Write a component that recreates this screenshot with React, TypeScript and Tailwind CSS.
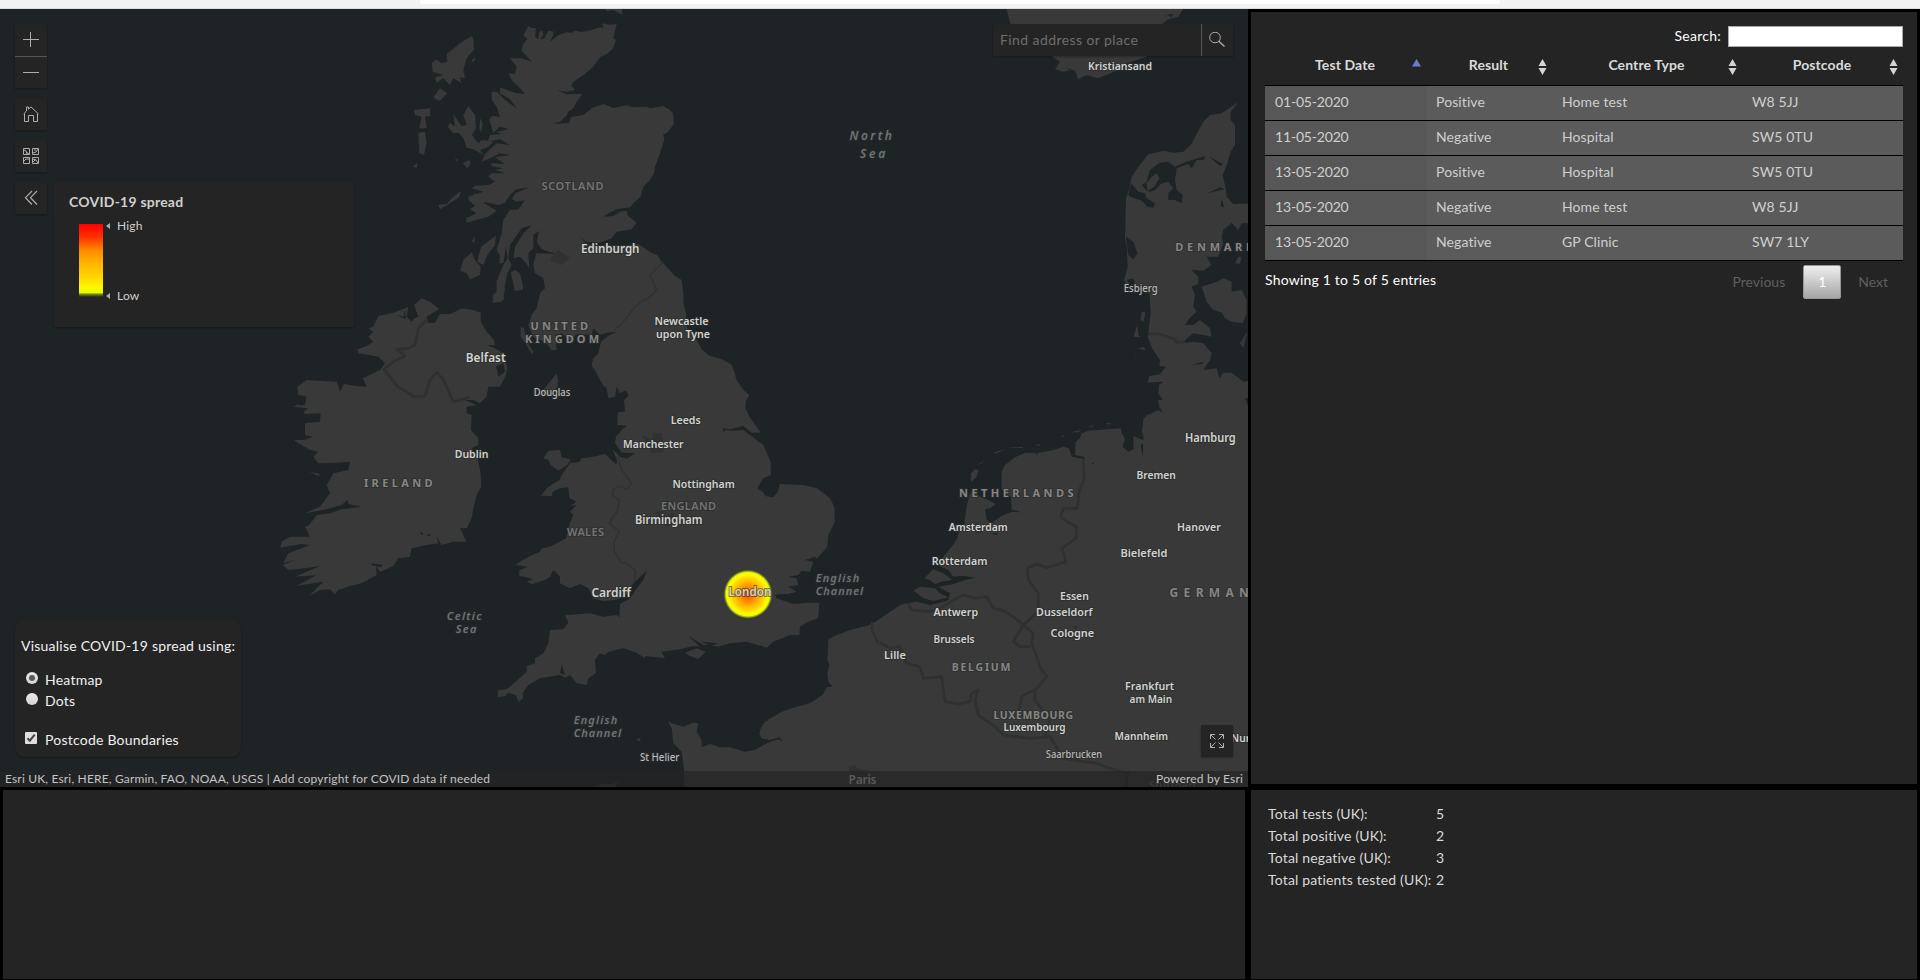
import React from "react";

type LabelKind = "city" | "town" | "country" | "region" | "water";
type MapLabel = [text: string, x: number, y: number, width: number, kind: LabelKind, size?: number];

const LABELS: MapLabel[] = [
  ["SCOTLAND", 541.5, 190, 62, "region"],
  ["Edinburgh", 581, 253, 58.5, "city", 12],
  ["Newcastle", 654.5, 325, 54, "city"],
  ["upon Tyne", 656, 338, 54, "city"],
  ["UNITED", 530.5, 330, 57.5, "country"],
  ["KINGDOM", 525, 343, 74, "country"],
  ["Belfast", 465.7, 362, 40, "city", 12],
  ["Douglas", 533.7, 396, 36.5, "town"],
  ["IRELAND", 364, 487, 68.5, "country"],
  ["Dublin", 454.7, 458, 33.7, "city"],
  ["WALES", 567, 535.5, 37, "region"],
  ["Cardiff", 591.4, 597, 39.5, "city", 12],
  ["Leeds", 670.7, 423.5, 30, "city"],
  ["Manchester", 623.1, 447.7, 60.5, "city"],
  ["Nottingham", 672.4, 488, 62.3, "city"],
  ["ENGLAND", 661, 509.5, 55, "region"],
  ["Birmingham", 635, 523.5, 67.4, "city", 12],
  ["English", 815.7, 582, 43.5, "water"],
  ["Channel", 815.7, 595, 47.5, "water"],
  ["English", 573.7, 724, 43.5, "water"],
  ["Channel", 573.7, 737, 47.5, "water"],
  ["St Helier", 640, 760.5, 39.3, "town"],
  ["Celtic", 446.7, 619.5, 34.8, "water"],
  ["Sea", 455.7, 632.5, 20.7, "water"],
  ["North", 849.5, 139.7, 42.5, "water", 12],
  ["Sea", 860, 158, 25.3, "water", 12],
  ["Kristiansand", 1088, 69.5, 64, "city"],
  ["Hamburg", 1185, 442.3, 50.7, "city", 12],
  ["Bremen", 1136.5, 478.7, 39.4, "city"],
  ["NETHERLANDS", 959, 496.5, 114.5, "country"],
  ["Hanover", 1177.1, 531.3, 43.7, "city"],
  ["Amsterdam", 948.8, 531.3, 59, "city"],
  ["Bielefeld", 1120.4, 557.4, 47, "city"],
  ["Rotterdam", 931.7, 564.5, 55.7, "city"],
  ["Essen", 1060.1, 599.5, 28.7, "city"],
  ["GERMANY", 1169.6, 597, 92, "country", 12],
  ["Antwerp", 933.5, 616.3, 44.6, "city"],
  ["Dusseldorf", 1036.1, 616.3, 56.4, "city"],
  ["Cologne", 1050.5, 636.5, 43.6, "city"],
  ["Brussels", 933.5, 643.3, 41, "city"],
  ["Lille", 884.1, 658.5, 21.7, "city"],
  ["BELGIUM", 951.7, 670.5, 58.7, "country", 10.5],
  ["Frankfurt", 1125.1, 689.5, 49, "city"],
  ["am Main", 1129.5, 702.5, 42.6, "city"],
  ["LUXEMBOURG", 993.4, 719, 79.7, "country", 10.5],
  ["Luxembourg", 1003.5, 731.3, 62, "city"],
  ["Mannheim", 1114.5, 739.5, 53.6, "city"],
  ["Saarbrucken", 1045.8, 757.5, 56.3, "town"],
  ["Nurnberg", 1231, 741.7, 49, "city"],
  ["Stuttgart", 1149, 789, 48, "region"],
  ["DENMARK", 1175.3, 251, 78, "country"],
  ["Esbjerg", 1123.7, 292, 34, "town"],
];

const KIND: Record<LabelKind, string> = {
  city: "fill-[#d2d2d0] font-semibold",
  town: "fill-[#b9b9b7] font-medium",
  country: "fill-[#858584] font-bold",
  region: "fill-[#737473] font-semibold",
  water: "fill-[#6e7476] font-semibold italic",
};

function Label({ label }: { label: MapLabel }) {
  const [text, x, y, width, kind, size = 11] = label;
  const spaced = kind === "country" || kind === "region" || kind === "water";
  return (
    <text
      x={x}
      y={y}
      textLength={width}
      lengthAdjust={spaced ? "spacing" : "spacingAndGlyphs"}
      fontSize={size}
      className={KIND[kind]}
      stroke="#2c2e2d"
      strokeWidth={2}
      strokeOpacity={0.6}
      paintOrder="stroke"
    >
      {text}
    </text>
  );
}

function BaseMap() {
  return (
    <svg
      className="absolute inset-0 font-['Noto_Sans','Open_Sans',sans-serif]"
      width="1248"
      height="778"
      viewBox="0 9 1248 778"
    >
      <defs>
        <radialGradient id="heat">
          <stop offset="0" stopColor="#ff4a00" />
          <stop offset="0.2" stopColor="#ff7400" />
          <stop offset="0.45" stopColor="#ffae00" />
          <stop offset="0.65" stopColor="#ffd500" />
          <stop offset="0.78" stopColor="#fff700" />
          <stop offset="0.88" stopColor="#eaff00" />
          <stop offset="0.94" stopColor="#b9cc10" stopOpacity="0.6" />
          <stop offset="1" stopColor="#4a4048" stopOpacity="0" />
        </radialGradient>
      </defs>
      <rect y="9" width="1248" height="778" fill="#1e2326" />

      {/* Scotland and northern England */}
      <g transform="translate(400 0) scale(.33333)" fill="#383938">
        <path d="M385 78L395 84 408 85 405 110 415 118 418 95 428 92 430 105 420 118 432 116 445 92 462 95 458 108 450 125 475 105 500 97 516 98 525 92 545 96 575 90 600 82 610 84 606 70 630 74 650 72 640 115 648 120 640 145 620 162 600 172 580 200 550 225 520 245 515 258 525 270 500 276 472 270 500 283 548 281 530 305 520 325 505 335 500 347 480 365 460 371 505 370 515 350 550 345 575 325 610 312 640 324 680 316 700 322 740 320 750 325 790 318 810 330 819 340 822 372 800 400 790 402 793 420 780 460 765 500 762 520 750 540 730 560 722 590 700 610 690 622 650 628 630 638 610 650 640 648 660 635 680 632 684 648 710 668 695 688 650 695 635 715 600 728 560 726 540 710 560 732 600 735 680 735 715 732 735 745 755 758 772 765 785 785 800 800 822 825 845 840 850 880 850 910 858 940 860 980 890 1020 905 1048 926 1066 965 1078 995 1094 1003 1115 1010 1142 1010 1200H690L685 1178 675 1172 660 1180 650 1160 645 1190 625 1195 620 1165 600 1140 590 1120 575 1097 580 1075 595 1060 603 1025 625 1008 650 995 620 998 600 1005 580 985 575 1005 530 1003 510 1022 485 1000 465 1005 470 1050 455 1050 435 1025 400 1012 385 975 395 945 410 925 420 880 435 865 430 835 405 820 400 795 408 760 470 762 425 748 410 725 417 693 400 705 400 745 385 760 388 805 378 790 360 770 340 775 345 740 370 700 395 676 365 685 330 735 325 775 335 795 322 820 310 880 312 900 280 908 278 885 290 875 295 830 310 795 323 775 318 740 310 790 298 790 300 765 290 750 305 700 310 660 330 630 355 628 375 600 350 605 335 598 345 580 385 563 350 568 330 585 315 608 295 615 250 605 240 595 205 600 205 590 250 575 215 565 225 557 265 555 285 545 265 530 275 520 315 520 285 510 310 505 275 498 272 490 315 492 285 472 330 465 300 460 270 475 245 485 255 462 290 430 328 435 300 418 262 425 270 405 305 402 290 396 325 388 300 380 280 398 268 360 275 348 300 350 290 320 275 300 275 275 290 275 315 300 350 325 330 298 300 280 300 262 345 278 375 282 360 265 335 240 325 220 345 222 350 200 330 175 365 175 395 185 365 152 368 135 382 118 370 105Z" />
        <path d="M215 108L222 122 220 150 200 175 190 210 195 235 180 232 185 250 160 235 150 255 130 235 110 248 105 232 130 225 98 215 95 190 108 178 125 190 142 185 140 162 180 130ZM100 292L120 265 142 280 120 302 108 298ZM42 330L90 325 90 348 75 350 80 385 58 385 65 350 45 345ZM55 398L75 395 80 430 72 465 58 460ZM38 500L52 488 50 503ZM215 180L227 172 220 188ZM218 140L225 145 215 158ZM143 380L150 368 165 380 160 343 185 378 200 375 190 345 205 318 225 345 228 385 215 405 235 430 245 420 280 425 265 440 240 450 250 465 220 448 200 443 190 415 175 398 160 400ZM240 355L248 370 243 400 238 385ZM188 490L208 480 212 492 202 505ZM165 475L175 480 170 485ZM115 615L140 612 155 595 183 573 178 592 150 610 120 628ZM205 600L225 580 250 590 253 610 290 632 265 650 220 662 200 668 198 655 230 640 210 628 225 618ZM180 812L190 780 215 757 225 780 242 800 240 825 210 838 200 820ZM232 785L243 740 270 720 288 707 285 735 262 765 250 795ZM216 722L226 710 222 730ZM332 818L345 810 360 820 370 868 345 872ZM362 980L372 985 378 1020 400 1055 395 1063 380 1035 362 1010ZM470 1120L475 1145 455 1180 430 1190 420 1182ZM615 27L665 27 668 45 655 38 640 30 622 34Z" />
        <path d="M790 785L750 825 770 870 745 895 730 900 705 920 680 955 660 975 640 992" fill="none" stroke="#2f3130" strokeWidth="4" />
        <path d="M455 770L475 750 510 775 485 795 450 780Z" fill="#303231" />
      </g>

      {/* Ireland */}
      <g transform="translate(270 280) scale(.33333)" fill="#383938">
        <path d="M455 55L480 65 508 87 470 110 475 130 495 128 510 102 540 103 575 85 610 90 632 98 632 125 650 155 672 180 675 195 650 195 675 205 700 220 712 260 708 285 690 320 655 320 650 350 630 370 610 360 585 360 620 375 590 380 590 400 605 405 603 450 625 475 625 495 605 505 622 530 632 580 634 620 620 645 610 685 605 715 590 745 570 745 590 785 550 785 515 795 500 770 505 790 470 795 425 805 420 830 385 835 370 858 345 870 330 875 318 858 320 885 275 910 240 918 205 930 195 943 180 928 150 930 118 948 140 925 160 905 80 917 150 880 145 885 75 890 150 858 105 865 55 870 38 855 75 840 40 850 55 820 120 795 95 792 30 803 35 785 60 770 120 770 105 740 118 735 140 705 180 700 215 688 275 680 235 672 232 660 215 675 170 688 115 698 108 698 150 680 180 640 170 615 190 580 235 570 240 545 200 548 145 550 130 530 145 515 120 510 85 490 72 480 100 480 130 470 105 465 105 430 150 425 152 400 105 402 100 395 115 385 65 380 105 375 110 350 85 345 82 320 110 300 200 305 210 335 222 312 260 318 290 320 278 295 330 270 345 250 325 230 265 220 262 208 290 198 310 185 295 170 310 155 295 145 310 140 325 108 370 98 405 85 415 80 410 110 425 125 432 115 445 110 432 75ZM75 378L85 372 90 382ZM118 575L150 582 145 588Z" />
        <path d="M678 258L700 250 705 275 685 290ZM380 105L400 110 405 90 408 118ZM450 755L460 760 455 765ZM470 765L482 762 478 770ZM510 718L514 724ZM305 850L340 855 330 862 305 855Z" fill="#1e2326" />
        <path d="M470 120L445 145 435 195 415 205 380 208 405 228 370 245 342 268 385 322 410 335 430 350 465 348 480 300 500 277 520 300 550 365 600 352" fill="none" stroke="#2f3130" strokeWidth="8" strokeLinejoin="round" />
        <path d="M700 0L705 30 695 65 668 68 670 45 680 35 680 0ZM730 0H755L760 30 738 32Z" />
      </g>

      {/* England and Wales */}
      <g transform="translate(480 380) scale(.33333)" fill="#383938">
        <path d="M360 0L372 20 385 22 385 50 398 48 402 22 415 20 440 30 445 48 432 60 435 95 418 95 413 100 412 135 440 137 425 150 408 170 405 190 425 218 465 220 440 236 420 230 398 208 412 245 408 252 375 222 350 228 330 232 303 235 300 245 270 250 245 285 238 300 205 320 182 347 215 348 218 335 240 325 265 322 268 355 290 365 270 378 290 375 270 395 280 405 270 430 258 475 210 500 185 505 180 515 145 530 120 545 105 555 145 560 118 570 118 588 135 590 160 598 140 605 155 612 195 600 210 590 220 570 240 590 240 610 270 625 300 612 325 625 340 655 370 663 405 660 435 650 460 610 500 572 490 600 470 625 450 655 420 672 418 712 410 705 370 710 330 700 255 706 265 728 250 748 210 750 205 790 190 820 165 835 165 850 140 858 140 875 115 898 80 928 55 930 52 952 75 948 85 938 108 945 115 965 130 955 128 940 145 915 180 895 240 885 255 893 270 885 290 910 320 915 325 895 348 880 345 840 360 820 375 825 385 815 430 805 470 818 495 835 495 828 555 835 545 815 600 808 640 798 660 800 625 768 670 795 690 795 715 800 750 790 800 785 860 803 880 785 930 765 958 765 960 740 985 725 1015 715 1018 668 980 668 950 672 925 655 890 650 890 643 925 642 950 635 925 620 955 615 950 595 925 590 955 585 965 572 990 575 1000 545 975 540 1005 530 1010 538 1042 500 1045 465 1065 425 1063 380 1050 355 1012 325 970 315 900 312 893 335 880 352 855 348 850 337 832 325 850 295 873 285 872 245 850 195 790 150 760 152 735 150 730 158 728 145 750 148 790 138 815 158 843 158 808 110 797 85 797 65 808 45 790 30 770 0ZM615 818L650 805 677 815 655 838 630 828ZM205 212L240 210 245 232 272 238 262 255 235 272 212 255 205 240 190 235ZM467 1080L482 1073 480 1083ZM220 0L235 15 215 45 195 48Z" />
        <path d="M415 235L425 270 440 290 455 310 440 328 415 318 400 328 398 348 418 360 412 395 400 410 388 430 418 455 402 485 403 515 425 548 440 550 465 570 463 610" fill="none" stroke="#2f3130" strokeWidth="4" />
        <path d="M485 165L515 180 520 158 545 160 550 215 515 220 500 190ZM525 395L550 395 560 410 580 395 585 430 560 440 540 425ZM590 115L630 110 610 140Z" fill="#303231" />
        <path d="M885 645L930 650 955 665 940 672 890 655ZM245 855L255 885 240 880ZM665 785L715 790 690 798Z" fill="#1e2326" />
        {/* Northern France */}
        <path d="M1201 716L1170 735 1110 750 1070 765 1045 778 1042 840 1048 855 1042 880 1045 905 1058 920 1040 922 1030 943 990 970 940 983 905 995 855 1025 842 1045 838 1062 845 1075 870 1080 898 1072 908 1085 895 1078 860 1090 825 1110 795 1115 750 1102 720 1102 690 1092 665 1102 665 1080 650 1055 655 1030 640 1028 610 1040 575 1030 563 1023 575 1045 580 1090 605 1115 612 1170 612 1230H1201ZM340 1220L370 1210 385 1215 415 1205 405 1225H340Z" />
        <path d="M1175 725L1178 755 1195 790" fill="none" stroke="#2f3130" strokeWidth="7" />
        <path d="M1105 1160L1125 1155 1130 1165 1165 1170 1160 1200 1110 1180Z" fill="#303231" />
      </g>

      {/* Low Countries and Germany */}
      <g transform="translate(880 400) scale(.33333)" fill="#383938">
        <path d="M-2 657L30 635 65 613 110 605 150 615 190 605 205 600 210 580 175 560 220 552 255 540 285 533 250 527 220 530 205 510 178 498 190 470 215 440 232 415 240 385 252 375 260 320 268 285 280 270 300 290 325 300 348 312 330 325 315 328 320 360 335 370 360 350 395 335 425 337 395 328 393 290 365 268 365 215 375 195 405 172 435 158 470 160 520 150 550 140 567 145 575 170 615 178 612 170 585 165 587 125 600 115 605 100 625 92 722 85 725 100 735 115 728 140 745 155 760 148 760 108 798 124 785 95 790 65 800 45 812 42 822 55 870 48 895 52 912 75 930 102 915 60 890 40 850 40 835 10V0H1104V1170H-2ZM133 535L160 507 190 520 217 540 185 545 165 553 150 540ZM100 572L120 560 165 565 180 580 205 592 160 603 130 595ZM272 240L273 220 285 207 297 210 290 230 275 245ZM290 197L318 178 305 190ZM338 158L380 146 350 160ZM382 144L430 140 428 144ZM465 137L478 132 480 137ZM540 112L550 106 552 110ZM570 97L605 90 595 97ZM620 80L642 76 640 80ZM650 76L665 73ZM678 70L695 68 685 74Z" />
        <path d="M782 135L790 130 788 170ZM468 150L472 165 468 165ZM330 400L355 400 350 405ZM635 188L642 190 638 195Z" fill="#1e2326" />
        <g fill="none" stroke="#2f3130" strokeWidth="8" strokeLinejoin="round">
          <path d="M610 178L612 240 598 270 592 325 550 325 542 350 560 365 590 380 588 415 545 445 558 485 500 503 470 492 442 505 445 540 475 580 475 635 430 675 460 700 455 730 470 770 480 800 500 830 470 865 425 890 415 940" />
          <path d="M85 610L95 630 150 635 190 620 220 600 250 585 285 595 320 590 340 625 370 632 400 650 430 675 400 725 420 740 450 740" />
          <path d="M0 728L30 745 60 740 80 790 120 800 130 835 185 830 195 905 235 912 270 905 275 880 295 870 285 900 295 945 345 980 370 1005 450 1015 510 1010 550 1075 650 1090 690 1105 745 1120 735 1170" />
          <path d="M465 870L465 900 510 960 495 1005" />
        </g>
        <path d="M980 95L1000 88 1018 92 1010 115 1005 140 985 148 970 125ZM575 680L592 675 590 690ZM285 365L300 375 310 390 290 405ZM215 615L222 650 228 660ZM815 210L825 215 818 220Z" fill="#303231" />
        <path d="M1096 5L1104 15V0H1095Z" fill="#1e2326" />
      </g>

      {/* Denmark */}
      <g transform="translate(1060 60) scale(.33333)" fill="#383938">
        <path d="M565 1200H250V1075L270 1062 295 1050 310 1058 297 1040 312 1025 295 1000 297 975 310 965 262 968 268 948 300 942 318 920 298 918 300 900 290 885 275 862 263 830 272 760 268 700 235 690 222 665 205 675 192 662 203 620 200 560 195 535 198 415 208 385 215 350 235 320 265 283 310 272 340 278 370 275 392 255 430 185 450 165 485 160 535 126 512 155 512 180 525 195 525 255 512 275 500 315 488 345 497 385 500 410 520 432 570 430V490L545 490 535 510 515 488 490 510 485 530 490 550 475 590 440 590 455 615 430 632 395 630 415 650 415 672 395 680 405 705 400 740 410 755 388 775 375 795 400 795 420 780 450 805 455 830 430 825 400 820 378 838 370 850 400 845 430 850 455 880 450 900 430 930 470 925 478 955 490 938 515 938 550 965 570 962V1200Z" />
        <path d="M425 680L470 665 490 655 515 665 515 695 545 690 560 720 560 760 548 790 515 785 495 775 485 758 460 750 440 725ZM525 610L535 590 545 590 540 612ZM540 850L562 815 550 865ZM245 755L257 758 250 785 242 780ZM222 825L232 795 235 825 242 832 222 830ZM235 865L250 860 258 872ZM222 880L235 892 225 885Z" />
        <path d="M205 405L213 370 235 395 255 400 260 415 285 430 280 443 262 440 245 422 210 410ZM270 330L300 308 325 305 345 320 380 305 435 288 432 300 410 300 395 325 385 312 350 325 345 360 350 390 368 405 365 430 345 420 325 420 325 400 340 385 325 365 305 370 285 390 270 395 258 390 245 375 260 365 265 345ZM198 530L220 545 232 580 220 598 205 585ZM448 290L490 313 480 318ZM442 400L480 382 495 388 460 395ZM485 415L492 440 482 440ZM555 1015L565 1015V1040ZM392 915L430 905 448 885 425 912ZM480 315L492 318ZM200 660L220 655 240 715Z" fill="#1e2326" />
        <path d="M260 370L275 350 290 340 298 355 282 382 262 392Z" />
        <path d="M265 822L300 822 345 838 350 848 375 845" fill="none" stroke="#2f3130" strokeWidth="8" />
      </g>

      {/* Norway */}
      <g transform="translate(960 0) scale(.33333)" fill="#383938">
        <path d="M140 27H670L655 50 625 58 610 70 595 80 560 170 500 190 470 212 415 235 380 225 350 240 340 210 310 215 285 208 300 185 270 165 220 130 150 70Z" />
        <path d="M620 45L640 42 635 52ZM320 205L345 212 355 238 350 240 338 218Z" fill="#1e2326" />
      </g>

      {LABELS.map((label, i) => (
        <Label key={i} label={label} />
      ))}
      <text x="848.500" y="783.500" textLength="28" fontSize="12" className="fill-[#d2d2d0] font-semibold">
        Paris
      </text>

      <circle cx="748" cy="594.2" r="24.7" fill="url(#heat)" />
      <Label label={["London", 728.5, 595.7, 42.8, "city", 12]} />
    </svg>
  );
}

function Icon({ children }: { children: React.ReactNode }) {
  return (
    <svg width="16" height="16" viewBox="0 0 16 16" fill="none" stroke="#adadad" strokeWidth="1">
      {children}
    </svg>
  );
}

const BUTTON = "flex size-8 items-center justify-center bg-[#242424] shadow-[0_1px_2px_rgba(0,0,0,0.3)]";

function MapTools() {
  return (
    <div className="absolute top-[15px] left-[15px] flex flex-col gap-2.5">
      <div className="shadow-[0_1px_2px_rgba(0,0,0,0.3)]">
        <button className="flex size-8 items-center justify-center bg-[#242424]">
          <Icon><path d="M0 7.5h16M7.5 0v15" /></Icon>
        </button>
        <button className="flex size-8 items-center justify-center border-t border-[#555] bg-[#242424]">
          <Icon><path d="M0 7.5h16" /></Icon>
        </button>
      </div>
      <button className={BUTTON}>
        <Icon><path d="M.7 7.8L3.5 5V1h2v2.2L8 .9l7.3 6.9M1.5 7.5v8h4v-6h5v6h4v-8" /></Icon>
      </button>
      <button className={BUTTON}>
        <Icon>
          <path d="M.5.5h6v6h-6zM9.5.5h6v6h-6zM.5 9.5h6v6h-6zM9.5 9.5h6v6h-6z" />
          <path d="M1 2l2 1 1 3M3 4l3 2M10 5l3-1 2-3M12 1v2M1 13l2-2h3M10 11l3 1 2 3M13 11l-3 3" />
        </Icon>
      </button>
      <button className={BUTTON}>
        <Icon><path d="M9 1L2.5 7.7 9 14.5M14 1L7.5 7.7 14 14.5" strokeWidth="1.2" /></Icon>
      </button>
    </div>
  );
}

function Legend() {
  return (
    <div className="absolute top-[173px] left-[54px] h-[145px] w-[300px] bg-[#242424] px-[15px] pt-[11px] text-[#cfcfcf] shadow-[0_1px_2px_rgba(0,0,0,0.3)]">
      <h2 className="text-[14px] leading-[17px] font-bold tracking-[0.22px]">COVID-19 spread</h2>
      <div className="mt-[14px] ml-[10px] flex gap-[3px]">
        <div className="h-[73px] w-6 bg-[linear-gradient(to_bottom,#ff0000_0%,#ff3000_18%,#ff8a00_36%,#ffb400_54%,#ffd800_74%,#fff700_86%,#e5ff00_94%,#7f8c12_96%,#242424_100%)]" />
        <div className="-mt-[7px] flex h-[88px] flex-col justify-between text-[12px] leading-[18px] tracking-[0.2px]">
          {["High", "Low"].map((name) => (
            <div key={name} className="flex items-center gap-[7px]">
              <svg width="4" height="6" viewBox="0 0 4 6"><path d="M4 0v6L0 3z" fill="#adadad" /></svg>
              {name}
            </div>
          ))}
        </div>
      </div>
    </div>
  );
}

function Radio({ checked }: { checked?: boolean }) {
  return (
    <span className="mt-[-4px] flex size-3 items-center justify-center rounded-full bg-[linear-gradient(#e8e8e8,#d4d4d4)]">
      {checked && <span className="size-1.5 rounded-full bg-[#5a5a5a]" />}
    </span>
  );
}

function LayerControls() {
  return (
    <div className="absolute top-[610px] left-[15px] h-[138px] w-[226px] rounded-[9px] bg-[#242424] pt-4 pl-[6px] text-[14px] leading-[21px] tracking-[0.23px] whitespace-nowrap text-[#f0f0f0] shadow-[0_1px_2px_rgba(0,0,0,0.3)]">
      <p>Visualise COVID-19 spread using:</p>
      <label className="mt-[13px] ml-[5px] flex items-center gap-[7px]"><Radio checked />Heatmap</label>
      <label className="ml-[5px] flex items-center gap-[7px]"><Radio />Dots</label>
      <label className="mt-[18px] ml-1 flex items-center gap-2">
        <svg className="-mt-1" width="12" height="12" viewBox="0 0 12 12">
          <rect width="12" height="12" rx="1" fill="#dedede" />
          <path d="M2.5 6.3l2.3 2.4L9.7 2.6" fill="none" stroke="#444" strokeWidth="2" />
        </svg>
        Postcode Boundaries
      </label>
    </div>
  );
}

function MapView() {
  return (
    <section className="relative h-[778px] w-[1248px] overflow-hidden">
      <BaseMap />
      <MapTools />
      <Legend />
      <LayerControls />
      <div className="absolute top-[15px] left-[993px] flex h-8 w-60 bg-[#242424] shadow-[0_1px_2px_rgba(0,0,0,0.3)]">
        <div className="flex w-52 items-center pb-0.5 pl-[7px] text-[14px] tracking-[0.42px] text-[#6e6e6e]">Find address or place</div>
        <button className="flex w-8 items-center border-l border-[#555] pl-[7px]">
          <Icon><circle cx="6" cy="5.5" r="5.3" /><path d="M9.8 9.3l5.7 5.2" strokeWidth="1.4" /></Icon>
        </button>
      </div>
      <button className="absolute top-[716px] left-[1201px] flex size-8 items-center justify-center bg-[#242424] shadow-[0_1px_2px_rgba(0,0,0,0.3)]">
        <Icon><path d="M6 1.500H1.500V6M1.500 1.500L6.500 6.500M10 1.500h4.500V6M14.500 1.500L9.500 6.500M6 14.500H1.500V10M1.500 14.500L6.500 9.500M10 14.500h4.500V10M14.500 14.500L9.500 9.500" /></Icon>
      </button>
      <footer className="absolute inset-x-0 bottom-0 flex h-4 items-center justify-between bg-[#242424]/70 px-[5px] text-[12px] leading-4 tracking-[0.17px] text-[#c4c4c4]">
        <span>Esri UK, Esri, HERE, Garmin, FAO, NOAA, USGS | Add copyright for COVID data if needed</span>
        <span>Powered by Esri</span>
      </footer>
    </section>
  );
}

const ROWS = [
  ["01-05-2020", "Positive", "Home test", "W8 5JJ"],
  ["11-05-2020", "Negative", "Hospital", "SW5 0TU"],
  ["13-05-2020", "Positive", "Hospital", "SW5 0TU"],
  ["13-05-2020", "Negative", "Home test", "W8 5JJ"],
  ["13-05-2020", "Negative", "GP Clinic", "SW7 1LY"],
];
const HEADS = ["Test Date", "Result", "Centre Type", "Postcode"];
const GRID = "grid grid-cols-[161px_126px_190px_161px]";

function SortMark({ active }: { active: boolean }) {
  return (
    <svg width="9" height="16" viewBox="0 0 9 16">
      {active ? (
        <path d="M0 7.500h9L4.500 0z" fill="#7078d8" />
      ) : (
        <path d="M.5 7h8L4.500 0zM.5 9h8L4.500 16z" fill="#d4d4d4" />
      )}
    </svg>
  );
}

function Results() {
  return (
    <section className="h-[772px] w-[666px] bg-[#242424] px-[14px] pt-[14px] text-[14px] text-white">
      <div className="flex h-[21px] items-center justify-end gap-[7px]">
        <span className="-mt-0.5 tracking-[0.25px]">Search:</span>
        <input aria-label="Search" className="h-[21px] w-[175px] border border-[#a9a9a9] bg-white" />
      </div>
      <div className={`${GRID} h-[38px] pt-[9px] font-bold tracking-[0.1px] text-[#dadada]`}>
        {HEADS.map((head, i) => (
          <div key={head} className="flex h-[19px] items-center">
            <span className="-mt-0.5 flex-1 pl-[13px] text-center">{head}</span>
            <span className="mt-0.5 mr-[5px]"><SortMark active={i === 0} /></span>
          </div>
        ))}
      </div>
      <div className="border-t border-black">
        {ROWS.map((row, r) => (
          <div key={r} className={`${GRID} h-[35px] border-b border-black bg-[#5b5b5b] text-[#cfcfcf]`}>
            {row.map((cell, i) => (
              <div key={i} className={i === 0 ? "flex items-center bg-[#575757] pb-[3px] pl-2.5 tracking-[-0.18px]" : "flex items-center pb-[3px] pl-2.5 tracking-[0.1px]"}>{cell}</div>
            ))}
          </div>
        ))}
      </div>
      <div className="flex justify-between pt-1">
        <span className="pt-1 tracking-[0.2px]">Showing 1 to 5 of 5 entries</span>
        <div className="flex h-[34px] items-center text-[#5f5f5f]">
          <span className="pb-0.5">Previous</span>
          <span className="mr-[17px] ml-[18px] flex h-[34px] w-[38px] items-center justify-center rounded-xs border border-[#979797] bg-[linear-gradient(#efefef,#a5a5a5)] pb-0.5 text-white">1</span>
          <span className="mr-[15px] pb-0.5">Next</span>
        </div>
      </div>
    </section>
  );
}

const TOTALS = [
  ["Total tests (UK):", 5],
  ["Total positive (UK):", 2],
  ["Total negative (UK):", 3],
  ["Total patients tested (UK):", 2],
];

export default function App() {
  return (
    <div className="flex h-[980px] w-[1920px] flex-col overflow-hidden bg-black font-['Lato',sans-serif]">
      <header className="flex h-[9px] justify-center border-b border-[#dcdcdc] bg-[#f2f2f2]">
        <div className="h-1 w-[1080px] rounded-b-[3px] bg-white" />
      </header>
      <div className="flex">
        <div className="flex w-[1251px] flex-col gap-[3px]">
          <MapView />
          <section className="ml-[3px] h-[189px] w-[1242px] bg-[#242424]" />
        </div>
        <div className="flex flex-col gap-1.5 pt-[3px]">
          <Results />
          <section className="h-[189px] w-[666px] bg-[#242424] pt-[13px] pl-[17px] text-[14px] leading-[22px] tracking-[0.17px] text-[#dadada]">
            {TOTALS.map(([name, value]) => (
              <div key={name} className="flex">
                <span className="w-[168px] whitespace-nowrap">{name}</span>
                <span>{value}</span>
              </div>
            ))}
          </section>
        </div>
      </div>
    </div>
  );
}
